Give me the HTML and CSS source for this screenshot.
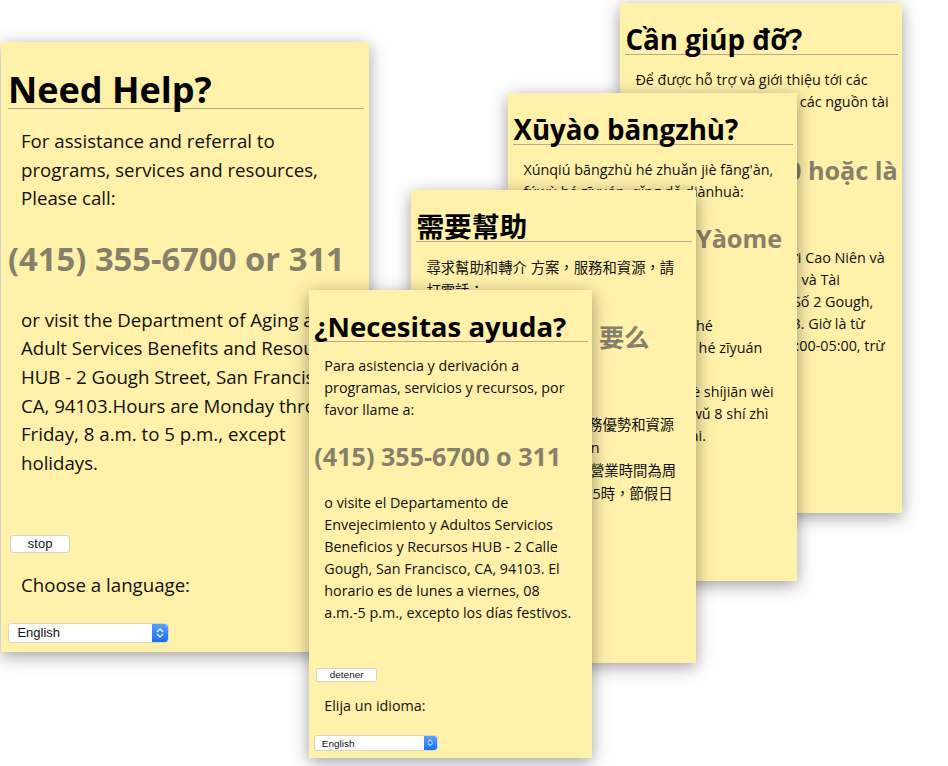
FILE: index.html
```html
<!DOCTYPE html>
<html lang="en">
<head>
<meta charset="utf-8">
<title>Need Help?</title>
<link rel="stylesheet" href="styles.css">
</head>
<body>
<div class="stage">

  <section class="card card-vi" lang="vi">
    <h1 class="title">Cần giúp đỡ?</h1>
    <p class="text">Để được hỗ trợ và giới thiệu tới các chương trình, dịch vụ và các nguồn tài nguyên, xin vui lòng gọi:</p>
    <h2 class="phone">(415) 355-6700 hoặc là 311</h2>
    <p class="text">Hoặc ghé thăm Sở Người Cao Niên và Người Khuyết Tật Lợi ích và Tài nguyên trung tâm HUB Số 2 Gough, San&nbsp;Francisco, CA, 94103. Giờ là từ Thứ Hai đến Thứ Sáu 08:00-05:00, trừ ngày lễ.</p>
    <div class="actions"><button class="btn" type="button">dừng lại</button></div>
    <p class="text">Chọn một ngôn ngữ:</p>
    <div class="select"><span class="select-value">English</span><span class="stepper"><svg viewBox="0 0 16 20" width="100%" height="100%"><path d="M5 8.5 L8 5.5 L11 8.5 M5 11.5 L8 14.5 L11 11.5" fill="none" stroke="#fff" stroke-width="1.4" stroke-linecap="round" stroke-linejoin="round"/></svg></span></div>
  </section>

  <section class="card card-py" lang="zh-Latn">
    <h1 class="title">Xūyào bāngzhù?</h1>
    <p class="text">Xúnqiú bāngzhù hé zhuǎn jiè fāng'àn, fúwù hé zīyuán, qǐng dǎ diànhuà:</p>
    <h2 class="phone">(415) 355-6700 Yàome 311</h2>
    <p class="text">Huò fǎngwèn lǎonián rén hé cánzhàngrén fúwù yōushì hé zīyuán zhōngxīn HUB - 2 Gough, <span class="nowrap">Jiùjīnshì, CA, 94103.</span> Yíngyè shíjiān wèi zhōuyī zhì zhōuwǔ shàngwǔ 8 shí zhì xiàwǔ wǔ diǎn, jiàrì chúwài.</p>
    <div class="actions"><button class="btn" type="button">tíngzhǐ</button></div>
    <p class="text">Xuǎnzé yǔyán:</p>
    <div class="select"><span class="select-value">English</span><span class="stepper"><svg viewBox="0 0 16 20" width="100%" height="100%"><path d="M5 8.5 L8 5.5 L11 8.5 M5 11.5 L8 14.5 L11 11.5" fill="none" stroke="#fff" stroke-width="1.4" stroke-linecap="round" stroke-linejoin="round"/></svg></span></div>
  </section>

  <section class="card card-zh" lang="zh-Hant">
    <h1 class="title">需要幫助</h1>
    <p class="text">尋求幫助和轉介 方案，服務和資源，請打電話：</p>
    <h2 class="phone">(415) 355-6700 要么 311</h2>
    <p class="text">或訪問 老人和殘障人士服務優勢和資源中心 - 2 Gough Street, San Francisco,&nbsp;CA, (94103)。 營業時間為周<span class="nowrap">一至周五</span>，上午8時至下午5時，節假日除外。</p>
    <div class="actions"><button class="btn" type="button">停止</button></div>
    <p class="text">選擇語言：</p>
    <div class="select"><span class="select-value">English</span><span class="stepper"><svg viewBox="0 0 16 20" width="100%" height="100%"><path d="M5 8.5 L8 5.5 L11 8.5 M5 11.5 L8 14.5 L11 11.5" fill="none" stroke="#fff" stroke-width="1.4" stroke-linecap="round" stroke-linejoin="round"/></svg></span></div>
  </section>

  <section class="card card-en" lang="en">
    <h1 class="title">Need Help?</h1>
    <p class="text">For assistance and referral to programs, services and resources, Please call:</p>
    <h2 class="phone">(415) 355-6700 or 311</h2>
    <p class="text">or visit the Department of Aging and Adult Services Benefits and Resource HUB - 2 Gough Street, San Francisco, CA, 94103.Hours are Monday through Friday, 8 a.m. to 5 p.m., except holidays.</p>
    <div class="actions"><button class="btn" type="button">stop</button></div>
    <p class="text">Choose a language:</p>
    <div class="select"><span class="select-value">English</span><span class="stepper"><svg viewBox="0 0 16 20" width="100%" height="100%"><path d="M5 8.5 L8 5.5 L11 8.5 M5 11.5 L8 14.5 L11 11.5" fill="none" stroke="#fff" stroke-width="1.4" stroke-linecap="round" stroke-linejoin="round"/></svg></span></div>
  </section>

  <section class="card card-es" lang="es">
    <h1 class="title">¿Necesitas ayuda?</h1>
    <p class="text">Para asistencia y derivación a programas, servicios y recursos, por favor llame a:</p>
    <h2 class="phone">(415) 355-6700 o 311</h2>
    <p class="text">o visite el Departamento de Envejecimiento y Adultos Servicios Beneficios y Recursos HUB - 2 Calle Gough, San Francisco, CA, 94103. El horario es de lunes a viernes, 08 <span class="nowrap">a.m.-5</span> p.m., excepto los días festivos.</p>
    <div class="actions"><button class="btn" type="button">detener</button></div>
    <p class="text">Elija un idioma:</p>
    <div class="select"><span class="select-value">English</span><span class="stepper"><svg viewBox="0 0 16 20" width="100%" height="100%"><path d="M5 8.5 L8 5.5 L11 8.5 M5 11.5 L8 14.5 L11 11.5" fill="none" stroke="#fff" stroke-width="1.4" stroke-linecap="round" stroke-linejoin="round"/></svg></span></div>
  </section>

</div>
</body>
</html>
```

FILE: styles.css
```css
* {
  box-sizing: border-box;
}

html,
body {
  margin: 0;
  padding: 0;
  background: #ffffff;
}

.stage {
  position: relative;
  width: 948px;
  height: 766px;
  overflow: hidden;
  background: #ffffff;
}

/* Each card is the same page photographed at its own scale;
   every size inside is in em so it follows the card's font size. */
.card {
  position: absolute;
  display: flow-root;
  font-family: "Open Sans", "Noto Sans CJK TC", "Noto Sans", sans-serif;
  color: #111111;
  background: #fff0aa;
  padding: 1.667em 0.278em 0.5em 0.389em;
  box-shadow: 0 4px 16px rgba(0, 0, 0, 0.38);
}

.card-en {
  left: 1px;
  top: 42px;
  width: 368px;
  font-size: 18px;
  z-index: 1;
}

.card-es {
  left: 309px;
  top: 290px;
  width: 283px;
  font-size: 13.8px;
  z-index: 5;
}

.card-zh {
  left: 411px;
  top: 190px;
  width: 285px;
  font-size: 13.86px;
  z-index: 4;
}

.card-zh .text {
  line-height: 1.6;
}

.card-py {
  left: 508px;
  top: 93px;
  width: 289px;
  font-size: 13.86px;
  z-index: 3;
}

.card-vi {
  left: 620px;
  top: 3px;
  width: 282px;
  font-size: 13.86px;
  z-index: 2;
}

.title {
  margin: 0;
  font-size: 2em;
  font-weight: 700;
  line-height: 1;
  color: #000000;
  border-bottom: 1px solid #b3ac8c;
}

.text {
  margin: 0.964em 0;
  padding: 0 0.55em 0 0.696em;
  font-size: 1.037em;
  line-height: 1.537;
}

.nowrap {
  white-space: nowrap;
}

.phone {
  margin: 0.6em 0 0.63em;
  font-size: 1.82em;
  font-weight: 700;
  line-height: 1.6;
  color: #867f69;
}

.actions {
  display: flex;
  margin-top: 3.15em;
}

.btn {
  margin: 0 0 0 0.15em;
  height: 1.385em;
  padding: 0 1.3em;
  font-family: "Liberation Sans", Arial, "Noto Sans CJK TC", sans-serif;
  font-size: 0.722em;
  line-height: 1;
  color: #111111;
  background: #ffffff;
  border: 1px solid #d6d2c4;
  border-radius: 0.25em;
}

.select {
  display: flex;
  align-items: stretch;
  width: 8.94em;
  height: 1.11em;
  margin-top: 1.31em;
  background: #ffffff;
  border: 1px solid #d9d5c5;
  border-radius: 0.2em;
  font-family: "Liberation Sans", Arial, sans-serif;
  overflow: hidden;
}

.select-value {
  flex: 1;
  display: flex;
  align-items: center;
  padding-left: 0.65em;
  font-size: 0.722em;
  color: #111111;
}

.stepper {
  width: 0.89em;
  background: linear-gradient(#5aa0fa, #1c6fe9);
  border-radius: 0 0.2em 0.2em 0;
}

.stepper svg {
  display: block;
}
```
